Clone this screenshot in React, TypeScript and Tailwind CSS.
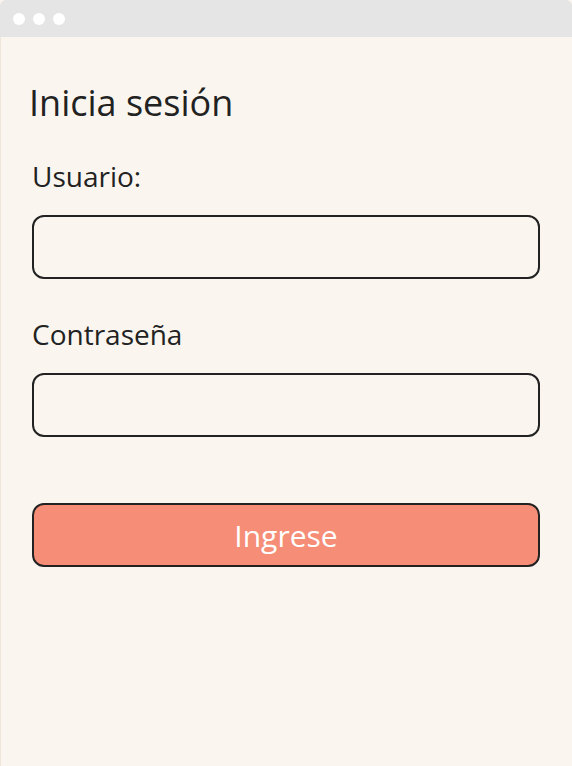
export default function App() {
  return (
    <div className="w-[572px] h-[766px] flex flex-col bg-[#faf6ef] font-['Open_Sans',sans-serif] text-[#222]">
      {/* barra de ventana */}
      <div className="h-[37px] shrink-0 bg-[#e5e5e5] rounded-t-[6px] flex items-center gap-[8px] pl-[13px]">
        <span className="w-[12px] h-[12px] rounded-full bg-white" />
        <span className="w-[12px] h-[12px] rounded-full bg-white" />
        <span className="w-[12px] h-[12px] rounded-full bg-white" />
      </div>

      <div className="flex-1 border-l border-[#eee6da] pl-[31px] pr-[32px] pt-[44px]">
        <h1 className="text-[36px] leading-[44px] -ml-[3px]">Inicia sesión</h1>

        <label className="block mt-[33px] text-[28px] leading-[36px]">Usuario:</label>
        <input
          type="text"
          className="mt-[21px] block w-[508px] h-[64px] rounded-[12px] border-2 border-[#222] bg-transparent px-3 outline-none"
        />

        <label className="block mt-[37px] text-[28px] leading-[36px]">Contraseña</label>
        <input
          type="password"
          className="mt-[21px] block w-[508px] h-[64px] rounded-[12px] border-2 border-[#222] bg-transparent px-3 outline-none"
        />

        <button className="mt-[66px] block w-[508px] h-[64px] rounded-[12px] border-2 border-[#222] bg-[#f58d77] text-white text-[30px]">
          Ingrese
        </button>
      </div>
    </div>
  );
}
